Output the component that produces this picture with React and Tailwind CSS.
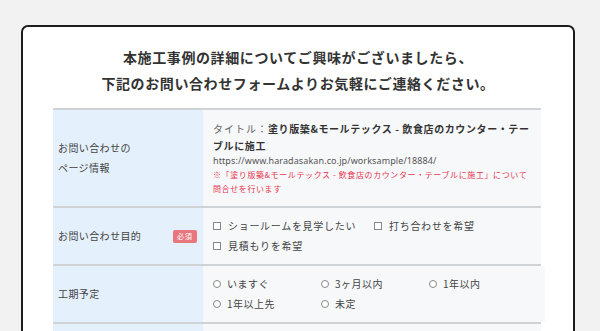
import React from "react";

const jp = { fontFamily: '"Noto Sans CJK JP", "Noto Sans", sans-serif' };

function Check({ label, className = "" }) {
  return (
    <div className={"flex items-center " + className}>
      <span className="w-[8px] h-[8px] border border-[#888] bg-white mr-[7px] shrink-0" />
      <span>{label}</span>
    </div>
  );
}

function Radio({ label }) {
  return (
    <div className="flex items-center w-[108px]">
      <span className="w-[8px] h-[8px] rounded-full border border-[#888] bg-white mr-[6px] shrink-0" />
      <span>{label}</span>
    </div>
  );
}

function Row({ label, badge, children, padClass = "py-[8px]" }) {
  return (
    <div className="flex border-t-2 border-[#cfd3d6]">
      <div className="w-[150px] shrink-0 bg-[#e4f0fc] pl-[5px] pr-[6px] flex items-center justify-between text-[10px] leading-[20px] tracking-[0.4px] text-[#444]">
        <div>{label}</div>
        {badge && (
          <span className="bg-[#e8767d] text-white text-[7px] leading-[13px] h-[13px] w-[24px] rounded-[2px] text-center tracking-[1px]">
            必須
          </span>
        )}
      </div>
      <div className={"flex-1 bg-[#f7f8fa] pl-[10px] pr-[8px] " + padClass}>{children}</div>
    </div>
  );
}

export default function App() {
  return (
    <div className="min-h-[331px] bg-[#f2f2f2] pt-[25px] overflow-hidden" style={jp}>
      <div className="ml-[21px] w-[554px] h-[340px] bg-white border-2 border-[#1c1c1c] rounded-[7px] pt-[17px]">
        <div className="text-center text-[14px] leading-[26px] font-bold text-[#333] tracking-[0.6px]">
          <div>本施工事例の詳細についてご興味がございましたら、</div>
          <div>下記のお問い合わせフォームよりお気軽にご連絡ください。</div>
        </div>
        <div className="ml-[30px] w-[488px] mt-[12px]">
          <Row
            label={
              <div>
                お問い合わせの
                <br />
                ページ情報
              </div>
            }
            padClass="pt-[10px] pb-[10px]"
          >
            <div className="whitespace-nowrap text-[10px] leading-[17px] tracking-[0.6px] text-[#333]">
              <span className="text-[#666] tracking-[1px]">タイトル：</span>
              <span className="font-bold">
                塗り版築&amp;モールテックス - 飲食店のカウンター・テー
                <br />
                ブルに施工
              </span>
            </div>
            <div
              className="text-[9px] leading-[14px] tracking-[0.1px] text-[#555]"
              style={{ fontFamily: '"Noto Sans", "Open Sans", sans-serif' }}
            >
              https://www.haradasakan.co.jp/worksample/18884/
            </div>
            <div className="text-[8px] leading-[14px] tracking-[0.6px] text-[#e6364e] whitespace-nowrap">
              ※「塗り版築&amp;モールテックス - 飲食店のカウンター・テーブルに施工」について
              <br />
              問合せを行います
            </div>
          </Row>
          <Row label="お問い合わせ目的" badge>
            <div className="text-[10px] leading-[20px] tracking-[0.7px] text-[#444]">
              <div className="flex">
                <Check label="ショールームを見学したい" className="w-[161px]" />
                <Check label="打ち合わせを希望" />
              </div>
              <Check label="見積もりを希望" />
            </div>
          </Row>
          <Row label="工期予定">
            <div className="text-[10px] leading-[20px] tracking-[0.5px] text-[#444]">
              <div className="flex">
                <Radio label="いますぐ" />
                <Radio label="3ヶ月以内" />
                <Radio label="1年以内" />
              </div>
              <div className="flex">
                <Radio label="1年以上先" />
                <Radio label="未定" />
              </div>
            </div>
          </Row>
          <Row label="">
            <div className="h-[40px]" />
          </Row>
        </div>
      </div>
    </div>
  );
}
